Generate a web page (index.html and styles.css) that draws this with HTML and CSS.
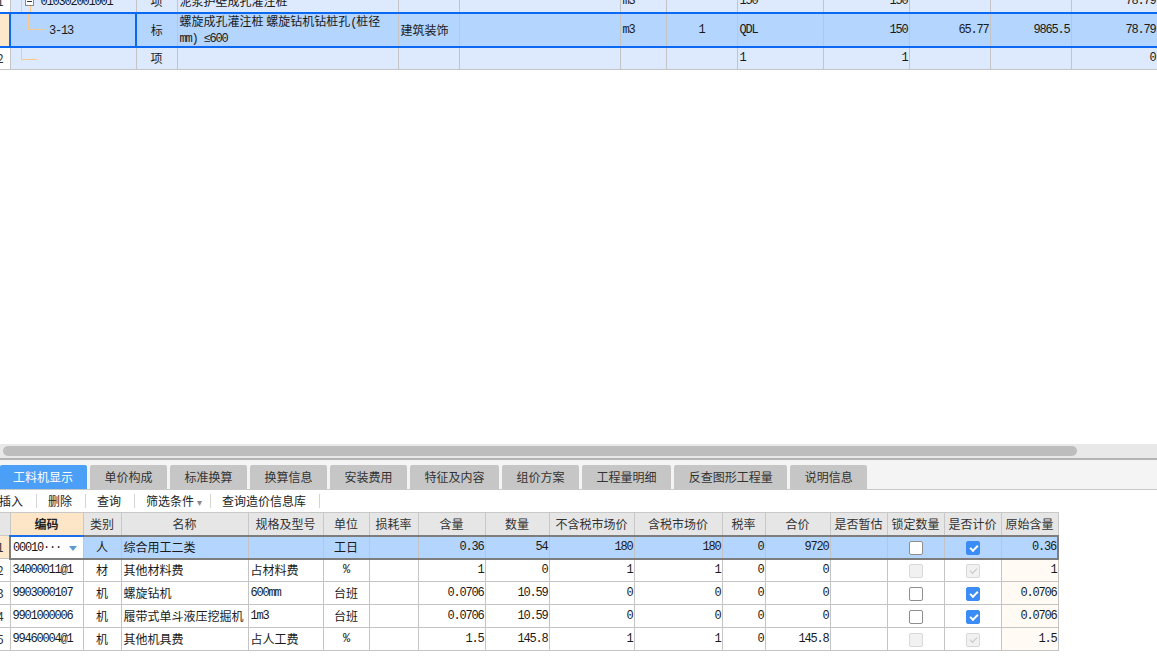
FILE: index.html
```html
<!DOCTYPE html>
<html lang="zh">
<head>
<meta charset="utf-8">
<title>工料机显示</title>
<link rel="stylesheet" href="styles.css">
</head>
<body>
<div class="upper">
  <table class="grid top">
    <colgroup>
      <col style="width:10px"><col style="width:126px"><col style="width:41px"><col style="width:221px">
      <col style="width:61px"><col style="width:161px"><col style="width:46px"><col style="width:71px">
      <col style="width:86px"><col style="width:86px"><col style="width:81px"><col style="width:81px"><col style="width:86px">
    </colgroup>
    <tr class="r0">
      <td class="rn">1</td>
      <td class="code tree"><span class="ln a-full"></span><span class="ln b-low"></span><span class="box"></span><span class="n t0">010302001001</span></td>
      <td class="c">项</td>
      <td>泥浆护壁成孔灌注桩</td>
      <td></td><td></td>
      <td class="n">m3</td><td></td>
      <td class="n">150</td>
      <td class="n r">150</td><td></td><td></td>
      <td class="n r">78.79</td>
    </tr>
    <tr class="sel">
      <td class="rn hot"></td>
      <td class="code tree edit"><span class="ln b-top"></span><span class="ln b-h"></span><span class="n t1">3-13</span></td>
      <td class="c">标</td>
      <td class="wrap">螺旋成孔灌注桩 螺旋钻机钻桩孔<span class="n">(</span>桩径<br><span class="n">mm) ≤600</span></td>
      <td>建筑装饰</td><td></td>
      <td class="n">m3</td>
      <td class="n c">1</td>
      <td class="n">QDL</td>
      <td class="n r">150</td>
      <td class="n r">65.77</td>
      <td class="n r">9865.5</td>
      <td class="n r">78.79</td>
    </tr>
    <tr class="r2">
      <td class="rn">2</td>
      <td class="code tree"><span class="ln a-top"></span><span class="ln a-h"></span></td>
      <td class="c">项</td>
      <td></td><td></td><td></td><td></td><td></td>
      <td class="n">1</td>
      <td class="n r">1</td><td></td><td></td>
      <td class="n r">0</td>
    </tr>
  </table>
</div>

<div class="hscroll"><div class="thumb"></div></div>

<div class="tabbar">
  <div class="tab active">工料机显示</div>
  <div class="tab">单价构成</div>
  <div class="tab">标准换算</div>
  <div class="tab">换算信息</div>
  <div class="tab">安装费用</div>
  <div class="tab">特征及内容</div>
  <div class="tab">组价方案</div>
  <div class="tab">工程量明细</div>
  <div class="tab">反查图形工程量</div>
  <div class="tab">说明信息</div>
</div>

<div class="toolbar">
  <span class="tool first">插入</span><span class="sep"></span>
  <span class="tool">删除</span><span class="sep"></span>
  <span class="tool">查询</span><span class="sep"></span>
  <span class="tool drop">筛选条件<span class="caret">▾</span></span><span class="sep"></span>
  <span class="tool">查询造价信息库</span><span class="sep"></span>
</div>

<table class="grid bottom">
  <colgroup>
    <col style="width:10px"><col style="width:73px"><col style="width:38px"><col style="width:127px">
    <col style="width:75px"><col style="width:46px"><col style="width:49px"><col style="width:67px">
    <col style="width:64px"><col style="width:85px"><col style="width:88px"><col style="width:43px">
    <col style="width:65px"><col style="width:57px"><col style="width:57px"><col style="width:57px"><col style="width:57px">
  </colgroup>
  <tr class="head">
    <th class="rn"></th>
    <th class="hot-col">编码</th>
    <th>类别</th><th>名称</th><th>规格及型号</th><th>单位</th><th>损耗率</th>
    <th>含量</th><th>数量</th><th>不含税市场价</th><th>含税市场价</th><th>税率</th>
    <th>合价</th><th>是否暂估</th><th>锁定数量</th><th>是否计价</th><th>原始含量</th>
  </tr>
  <tr class="sel2">
    <td class="rn hot">1</td>
    <td class="code2 edit2"><span class="n">00010···</span><span class="dd"></span></td>
    <td class="c">人</td>
    <td>综合用工二类</td>
    <td></td>
    <td class="c">工日</td>
    <td></td>
    <td class="n r">0.36</td>
    <td class="n r">54</td>
    <td class="n r">180</td>
    <td class="n r">180</td>
    <td class="n r">0</td>
    <td class="n r">9720</td>
    <td></td>
    <td class="c"><span class="cb"></span></td>
    <td class="c"><span class="cb on"></span></td>
    <td class="n r last">0.36</td>
  </tr>
  <tr>
    <td class="rn">2</td>
    <td class="n">34000011@1</td>
    <td class="c">材</td>
    <td>其他材料费</td>
    <td>占材料费</td>
    <td class="c n">%</td>
    <td></td>
    <td class="n r">1</td>
    <td class="n r">0</td>
    <td class="n r">1</td>
    <td class="n r">1</td>
    <td class="n r">0</td>
    <td class="n r">0</td>
    <td></td>
    <td class="c"><span class="cb dis"></span></td>
    <td class="c"><span class="cb dis chk"></span></td>
    <td class="n r orig">1</td>
  </tr>
  <tr>
    <td class="rn">3</td>
    <td class="n">9903000107</td>
    <td class="c">机</td>
    <td>螺旋钻机</td>
    <td class="n">600mm</td>
    <td class="c">台班</td>
    <td></td>
    <td class="n r">0.0706</td>
    <td class="n r">10.59</td>
    <td class="n r">0</td>
    <td class="n r">0</td>
    <td class="n r">0</td>
    <td class="n r">0</td>
    <td></td>
    <td class="c"><span class="cb"></span></td>
    <td class="c"><span class="cb on"></span></td>
    <td class="n r orig">0.0706</td>
  </tr>
  <tr>
    <td class="rn">4</td>
    <td class="n">9901000006</td>
    <td class="c">机</td>
    <td>履带式单斗液压挖掘机</td>
    <td class="n">1m3</td>
    <td class="c">台班</td>
    <td></td>
    <td class="n r">0.0706</td>
    <td class="n r">10.59</td>
    <td class="n r">0</td>
    <td class="n r">0</td>
    <td class="n r">0</td>
    <td class="n r">0</td>
    <td></td>
    <td class="c"><span class="cb"></span></td>
    <td class="c"><span class="cb on"></span></td>
    <td class="n r orig">0.0706</td>
  </tr>
  <tr>
    <td class="rn">5</td>
    <td class="n">99460004@1</td>
    <td class="c">机</td>
    <td>其他机具费</td>
    <td>占人工费</td>
    <td class="c n">%</td>
    <td></td>
    <td class="n r">1.5</td>
    <td class="n r">145.8</td>
    <td class="n r">1</td>
    <td class="n r">1</td>
    <td class="n r">0</td>
    <td class="n r">145.8</td>
    <td></td>
    <td class="c"><span class="cb dis"></span></td>
    <td class="c"><span class="cb dis chk"></span></td>
    <td class="n r orig">1.5</td>
  </tr>
</table>
</body>
</html>
```

FILE: styles.css
```css
html, body {
  margin: 0;
  padding: 0;
  background: #ffffff;
}
body {
  font-family: "Noto Sans CJK SC", "Noto Sans", sans-serif;
  font-size: 12px;
  color: #1a1a1a;
  width: 1157px;
  height: 671px;
  overflow: hidden;
}

.n {
  font-family: "Liberation Mono", "Noto Sans CJK SC", monospace;
  letter-spacing: -1.2px;
}

/* ---------- generic grid ---------- */
.grid {
  border-collapse: collapse;
  table-layout: fixed;
}
.grid td, .grid th {
  padding: 0 2px;
  border: 1px solid #c4c4c4;
  white-space: nowrap;
  overflow: hidden;
  text-align: left;
  vertical-align: middle;
  line-height: 14px;
}
.grid .c { text-align: center; }
.grid .r { text-align: right; padding-right: 1px; }
.grid .rn {
  padding: 0;
  text-indent: -3px;
  border-left: none;
  background: #fff;
  color: #333;
}
.grid .hot { background: #fde8cc; }

/* ---------- upper table ---------- */
.upper {
  height: 444px;
  overflow: hidden;
  background: #fff;
}
.top {
  width: 1157px;
  margin-top: -11px;
  background: #dde9fc;
}
.top tr { height: 23px; }
.top tr.sel { height: 32px; }
.top tr.sel td {
  background: #b4d5fd;
  border-top: 2px solid #0b68f2;
  border-bottom: 2px solid #0b68f2;
}
.top tr.sel td.rn { background: #fde8cc; }
.top td.edit {
  background: #fff;
  border-left: 2px solid #0b68f2;
  border-right: 2px solid #0b68f2;
}
.top .wrap { white-space: normal; line-height: 14px; padding-left: 2px; }
.top td.tree { position: relative; padding: 0; }
.tree .t0 { padding-left: 30px; }
.tree .t1 { padding-left: 38px; }
.tree .ln { position: absolute; background: #f8c88c; }
.tree .a-full { left: 10px; top: 0; bottom: -1px; width: 1px; }
.tree .b-low { left: 19px; top: 16px; bottom: -1px; width: 1px; }
.tree .b-top { left: 17px; top: 0; height: 15px; width: 1px; }
.tree .b-h { left: 17px; top: 15px; width: 18px; height: 1px; }
.tree .a-top { left: 10px; top: 0; height: 11px; width: 1px; }
.tree .a-h { left: 10px; top: 11px; width: 16px; height: 1px; }
.tree .box {
  position: absolute;
  left: 14px;
  top: 7px;
  width: 9px;
  height: 9px;
  border: 1px solid #8a8a8a;
  background: #fff;
  box-sizing: border-box;
}
.tree .box::after {
  content: "";
  position: absolute;
  left: 1px;
  right: 1px;
  top: 3px;
  height: 1px;
  background: #333;
}

/* ---------- scrollbar ---------- */
.hscroll {
  background: #e8e8e8;
  display: flex;
  align-items: center;
  padding-left: 3px;
  box-sizing: border-box;
  border-bottom: 2px solid #b4b4b4;
  height: 16px;
}
.thumb {
  width: 1074px;
  height: 10px;
  border-radius: 5px;
  background: #bdbdbd;
}

/* ---------- tabs ---------- */
.tabbar {
  height: 30px;
  box-sizing: border-box;
  background: #f4f4f4;
  border-bottom: 1px solid #c8c8c8;
  display: flex;
  align-items: flex-end;
  gap: 3px;
  padding-top: 6px;
}
.tab {
  height: 24px;
  line-height: 24px;
  padding: 0 14.5px;
  background: #c6c6c6;
  color: #333;
  border-radius: 2px 2px 0 0;
  font-size: 12px;
  white-space: nowrap;
}
.tab:first-child { padding: 0 14px 0 13px; }
.tab.active {
  background: #4b9ff6;
  color: #fff;
}

/* ---------- toolbar ---------- */
.toolbar {
  height: 22px;
  display: flex;
  align-items: center;
  background: #fff;
  color: #222;
}
.tool { padding: 0 13px 0 11px; line-height: 22px; white-space: nowrap; }
.tool.first { margin-left: -12px; }
.tool.drop { padding-right: 7px; }
.caret {
  display: inline-block;
  width: 6px;
  margin-left: 3px;
  color: #8a8a8a;
  font-size: 10px;
}
.sep {
  width: 1px;
  height: 14px;
  background: #d4d4d4;
}

/* ---------- bottom table ---------- */
.bottom {
  width: 1058px;
}
.bottom tr { height: 23px; }
.bottom th {
  background: #e6e6e6;
  font-weight: normal;
  text-align: center;
  color: #333;
  border-color: #c8c8c8;
}
.bottom th.rn { background: #e6e6e6; }
.bottom th.hot-col {
  background: #fde6c8;
  font-weight: bold;
  color: #222;
  border-bottom: 2px solid #1a6fe8;
}
.bottom td { background: #fff; }
.bottom td.orig { background: #fffaf4; }
.bottom tr.sel2 td {
  background: #b4d5fd;
  border-top: 2px solid #7d7d7d;
  border-bottom: 2px solid #7d7d7d;
}
.bottom tr.sel2 td.rn {
  background: #fde8cc;
  border-top: 1px solid #c4c4c4;
  border-bottom: 1px solid #c4c4c4;
}
.bottom tr.sel2 td.edit2 {
  background: #fff;
  border-left: 2px solid #7d7d7d;
  position: relative;
}
.bottom tr.sel2 td.last { border-right: 2px solid #7d7d7d; }
.dd {
  position: absolute;
  right: 6px;
  top: 9px;
  width: 0;
  height: 0;
  border-left: 4px solid transparent;
  border-right: 4px solid transparent;
  border-top: 5px solid #5b9bd5;
}

/* checkboxes */
.cb {
  display: inline-block;
  vertical-align: middle;
  width: 14px;
  height: 14px;
  box-sizing: border-box;
  border: 1px solid #8e8e8e;
  border-radius: 2px;
  background: #fff;
  position: relative;
}
.cb.on {
  background: #3b8df5;
  border-color: #3b8df5;
}
.cb.on::after, .cb.chk::after {
  content: "";
  position: absolute;
  left: 3px;
  top: 3px;
  width: 6px;
  height: 3px;
  border-left: 2px solid #fff;
  border-bottom: 2px solid #fff;
  transform: rotate(-45deg);
  transform-origin: center;
}
.cb.dis {
  background: #f1f1f1;
  border-color: #d8d8d8;
}
.cb.dis.chk::after {
  border-color: #c6c6c6;
  border-width: 0 0 1.5px 1.5px;
}
```
